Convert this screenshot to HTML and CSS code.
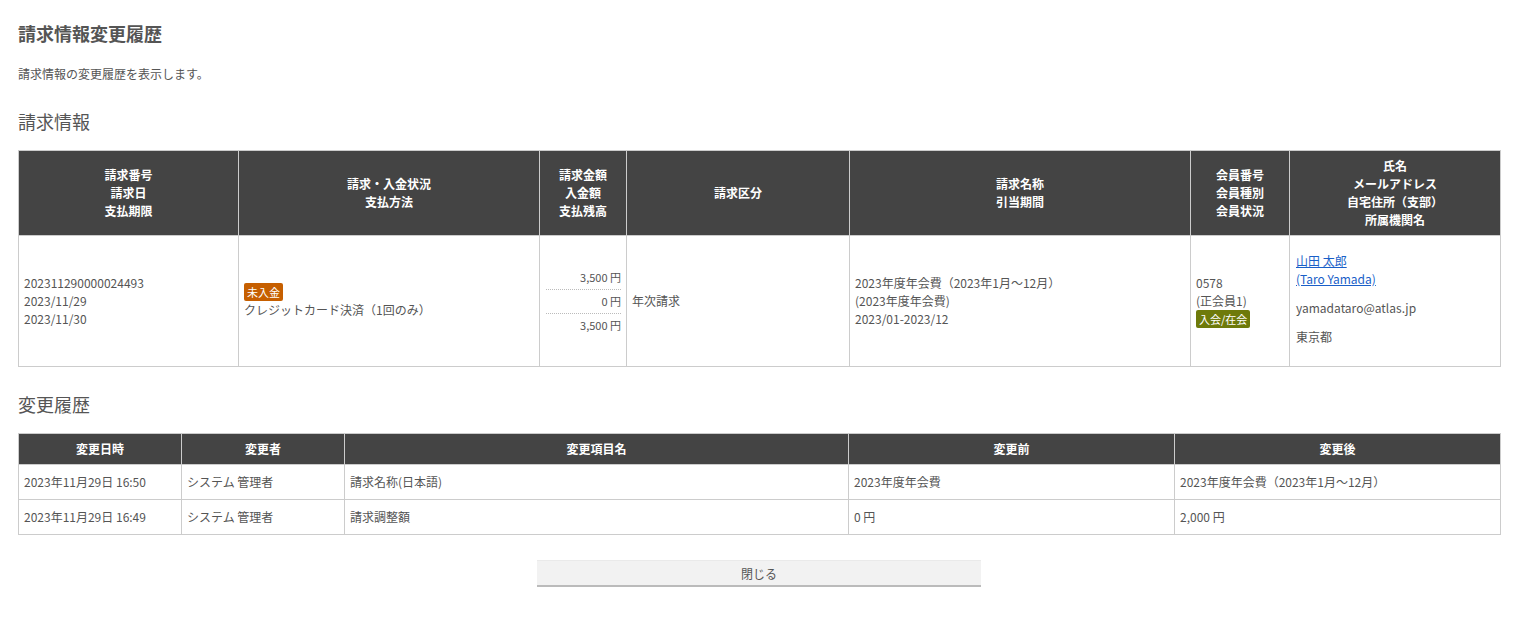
FILE: index.html
```html
<!DOCTYPE html>
<html lang="ja">
<head>
  <meta charset="UTF-8">
  <meta name="viewport" content="width=device-width, initial-scale=1.0">
  <title>請求情報変更履歴</title>
  <link rel="stylesheet" href="styles.css">
</head>
<body>

  <div class="page">
    <h1 class="page-title">請求情報変更履歴</h1>
    <p class="page-desc">請求情報の変更履歴を表示します。</p>

    <!-- 請求情報 -->
    <h2 class="section-title">請求情報</h2>
    <table class="data-table invoice-table">
      <colgroup>
        <col style="width: 220px">
        <col style="width: 301px">
        <col style="width: 87px">
        <col style="width: 223px">
        <col style="width: 341px">
        <col style="width: 99px">
        <col style="width: 211px">
      </colgroup>
      <thead>
        <tr>
          <th>請求番号<br>請求日<br>支払期限</th>
          <th>請求・入金状況<br>支払方法</th>
          <th>請求金額<br>入金額<br>支払残高</th>
          <th>請求区分</th>
          <th>請求名称<br>引当期間</th>
          <th>会員番号<br>会員種別<br>会員状況</th>
          <th>氏名<br>メールアドレス<br>自宅住所（支部）<br>所属機関名</th>
        </tr>
      </thead>
      <tbody>
        <tr>
          <td>202311290000024493<br>2023/11/29<br>2023/11/30</td>
          <td><span class="badge badge-unpaid">未入金</span><br>クレジットカード決済（1回のみ）</td>
          <td class="amounts">
            <div class="amount">3,500 円</div>
            <div class="amount">0 円</div>
            <div class="amount">3,500 円</div>
          </td>
          <td>年次請求</td>
          <td>2023年度年会費（2023年1月～12月）<br>(2023年度年会費)<br>2023/01-2023/12</td>
          <td>0578<br>(正会員1)<br><span class="badge badge-member">入会/在会</span></td>
          <td class="member">
            <div><a href="#">山田 太郎</a><br><a href="#">(Taro Yamada)</a></div>
            <div>yamadataro@atlas.jp</div>
            <div>東京都</div>
          </td>
        </tr>
      </tbody>
    </table>

    <!-- 変更履歴 -->
    <h2 class="section-title">変更履歴</h2>
    <table class="data-table history-table">
      <colgroup>
        <col style="width: 163px">
        <col style="width: 163px">
        <col style="width: 504px">
        <col style="width: 326px">
        <col style="width: 326px">
      </colgroup>
      <thead>
        <tr>
          <th>変更日時</th>
          <th>変更者</th>
          <th>変更項目名</th>
          <th>変更前</th>
          <th>変更後</th>
        </tr>
      </thead>
      <tbody>
        <tr>
          <td>2023年11月29日 16:50</td>
          <td>システム 管理者</td>
          <td>請求名称(日本語)</td>
          <td>2023年度年会費</td>
          <td>2023年度年会費（2023年1月～12月）</td>
        </tr>
        <tr>
          <td>2023年11月29日 16:49</td>
          <td>システム 管理者</td>
          <td>請求調整額</td>
          <td>0 円</td>
          <td>2,000 円</td>
        </tr>
      </tbody>
    </table>

    <div class="actions">
      <button class="close-button" type="button">閉じる</button>
    </div>
  </div>

</body>
</html>
```

FILE: styles.css
```css
* {
  margin: 0;
  padding: 0;
  box-sizing: border-box;
}

body {
  font-family: "Noto Sans CJK JP", "Noto Sans", sans-serif;
  font-size: 12px;
  line-height: 18px;
  color: #555;
  background-color: #fff;
}

.page {
  padding: 20px 17px 30px 18px;
}

.page-title {
  font-size: 18px;
  line-height: 27px;
  font-weight: bold;
  color: #555;
}

.page-desc {
  margin-top: 18px;
}

.section-title {
  font-size: 18px;
  line-height: 27px;
  font-weight: normal;
  margin-top: 25px;
  margin-bottom: 15px;
}

.data-table + .section-title {
  margin-top: 24px;
}

/* テーブル共通 */
.data-table {
  width: 100%;
  border-collapse: collapse;
  table-layout: fixed;
}

.data-table th {
  background-color: #444;
  color: #fff;
  font-weight: bold;
  text-align: center;
  vertical-align: middle;
  padding: 6px;
  border: 1px solid #ccc;
}

.data-table td {
  padding: 8px 5px;
  border: 1px solid #ccc;
  vertical-align: middle;
  text-align: left;
}

/* 請求情報テーブル */
.invoice-table td.amounts {
  text-align: right;
  font-size: 11px;
  padding: 0 5px 0 6px;
}

.amount {
  line-height: 23px;
}

.amount + .amount {
  border-top: 1px dotted #bbb;
}

.invoice-table td.member {
  padding: 16px 6px 20px;
}

.member div + div {
  margin-top: 11px;
}

.member a {
  color: #1a5fc8;
  text-decoration: underline;
}

.badge {
  display: inline-block;
  color: #fff;
  font-size: 11px;
  line-height: 18px;
  padding: 0 3px;
  border-radius: 2px;
}

.badge-unpaid {
  background-color: #c65f00;
}

.badge-member {
  background-color: #6e7a0a;
}

/* ボタン */
.actions {
  display: flex;
  justify-content: center;
  margin-top: 25px;
}

.close-button {
  width: 30%;
  height: 27px;
  background-color: #f2f2f2;
  color: #555;
  font-family: inherit;
  font-size: 12px;
  border: none;
  border-bottom: 2px solid #bbb;
  border-top: 1px solid #eaeaea;
  cursor: pointer;
}
```
